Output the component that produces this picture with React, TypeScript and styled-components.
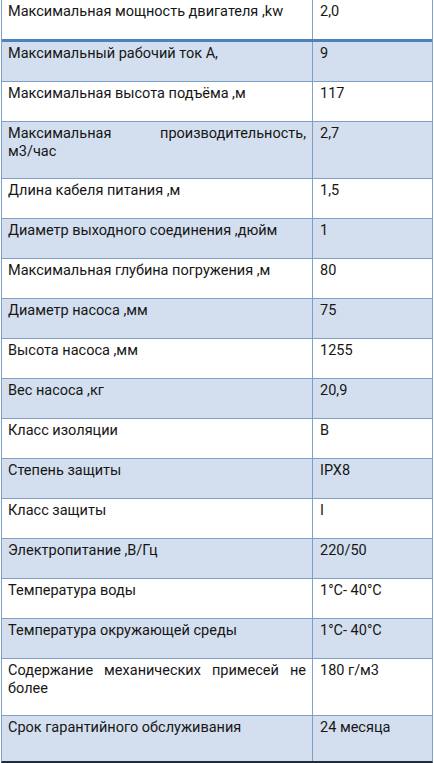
import React from "react";
import styled, { createGlobalStyle } from "styled-components";

interface ISpec {
  label: string;
  value: string;
  tall?: boolean;
}

const specs: ISpec[] = [
  { label: "Максимальная мощность двигателя ,kw", value: "2,0" },
  { label: "Максимальный рабочий ток А,", value: "9" },
  { label: "Максимальная высота подъёма ,м", value: "117" },
  { label: "Максимальная производительность, м3/\u2060час", value: "2,7", tall: true },
  { label: "Длина кабеля питания ,м", value: "1,5" },
  { label: "Диаметр выходного соединения ,дюйм", value: "1" },
  { label: "Максимальная глубина погружения ,м", value: "80" },
  { label: "Диаметр насоса ,мм", value: "75" },
  { label: "Высота насоса ,мм", value: "1255" },
  { label: "Вес насоса ,кг", value: "20,9" },
  { label: "Класс изоляции", value: "B" },
  { label: "Степень защиты", value: "IPX8" },
  { label: "Класс защиты", value: "I" },
  { label: "Электропитание ,В/Гц", value: "220/50" },
  { label: "Температура воды", value: "1°C- 40°C" },
  { label: "Температура окружающей среды", value: "1°C- 40°C" },
  { label: "Содержание механических примесей не более", value: "180 г/м3", tall: true },
  { label: "Срок гарантийного обслуживания", value: "24 месяца" },
];

export default function App() {
  return (
    <>
      <GlobalStyle />
      <Table>
        {specs.map((spec, i) => (
          <Row key={i} shaded={i % 2 === 1} tall={!!spec.tall} first={i === 0}>
            <LabelCell>{spec.label}</LabelCell>
            <ValueCell>{spec.value}</ValueCell>
          </Row>
        ))}
      </Table>
    </>
  );
}

const GlobalStyle = createGlobalStyle`
  html, body {
    margin: 0;
    padding: 0;
    background: #ffffff;
  }
  body {
    font-family: Roboto, "Noto Sans", sans-serif;
    color: #161616;
  }
`;

const Table = styled.div`
  box-sizing: border-box;
  width: 432px;
  margin-left: 1px;
  border-left: 1px solid #7f9fc6;
  border-right: 1px solid #7f9fc6;
  border-bottom: 2px solid #1f2a3a;
  display: flex;
  flex-direction: column;
`;

const Row = styled.div<{ shaded: boolean; tall: boolean; first: boolean }>`
  display: grid;
  grid-template-columns: 311px 1fr;
  height: ${(p) => (p.first ? 42 : p.tall ? 57 : 40)}px;
  background: ${(p) => (p.shaded ? "#d3dfee" : "#ffffff")};
  border-bottom: ${(p) => (p.first ? "3px solid #4f81bd" : "1px solid #7f9fc6")};
  box-sizing: border-box;

  &:last-child {
    border-bottom: none;
    height: 45px;
  }
`;

const LabelCell = styled.div`
  padding: 3px 6px 0 6px;
  font-size: 14.5px;
  line-height: 18px;
  text-align: justify;
  border-right: 1px solid #7f9fc6;
`;

const ValueCell = styled.div`
  padding: 3px 6px 0 7px;
  font-size: 14.5px;
  line-height: 18px;
`;
